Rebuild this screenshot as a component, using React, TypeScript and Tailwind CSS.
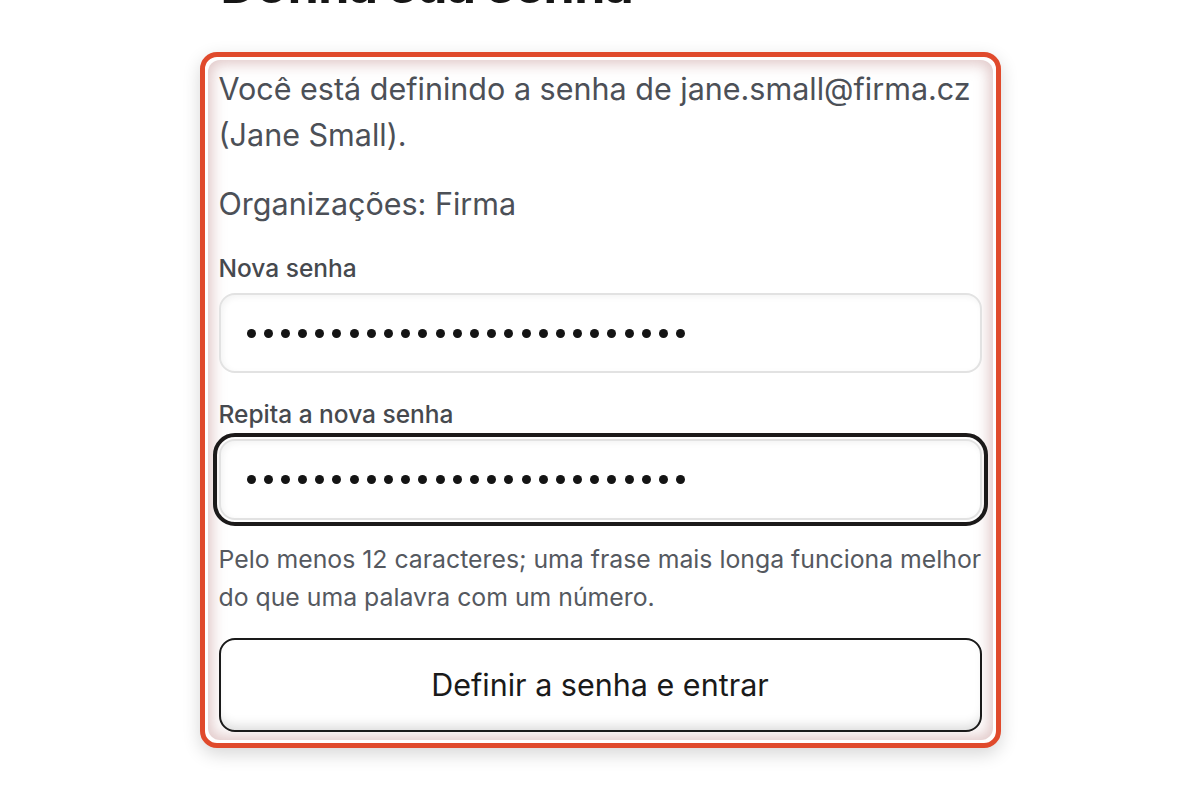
import React from "react";

const Dots = () => (
  <div className="flex items-center gap-[8.2px]">
    {Array.from({ length: 26 }).map((_, i) => (
      <span key={i} className="block w-[9px] h-[9px] rounded-full bg-[#141414]" />
    ))}
  </div>
);

export default function App() {
  return (
    <div
      className="min-h-screen w-full bg-white flex flex-col items-center overflow-hidden"
      style={{ fontFamily: "Inter, 'Noto Sans', Arial, sans-serif" }}
    >
      <div className="w-[801px]">
        <h1 className="-mt-[45px] ml-[21px] text-[50px] leading-[60px] font-bold text-[#161616] tracking-[-0.5px]">
          Defina sua senha
        </h1>
        <div className="mt-[37px] rounded-[17px] border-[5px] border-[#e04a2c] bg-white p-[3px] shadow-[0_6px_18px_rgba(0,0,0,0.16)]">
          <div className="rounded-[12px] bg-white px-[11px] pt-[6px] pb-[8px] shadow-[inset_0_0_14px_4px_rgba(195,145,145,0.5)]">
            <p className="text-[30.5px] leading-[46px] text-[#4c5057]">
              Você está definindo a senha de jane.small@firma.cz (Jane Small).
            </p>
            <p className="mt-[23px] text-[30.5px] leading-[46px] text-[#4c5057]">
              Organizações: Firma
            </p>
            <label className="mt-[23px] block text-[24.5px] leading-[36px] font-medium text-[#46494e]">
              Nova senha
            </label>
            <div className="mt-[7px] h-[80px] w-full rounded-[16px] border-2 border-[#e2e2e2] bg-white px-[26px] flex items-center shadow-[inset_2px_2px_6px_rgba(0,0,0,0.05)]">
              <Dots />
            </div>
            <label className="mt-[23px] block text-[24.5px] leading-[36px] font-medium text-[#46494e]">
              Repita a nova senha
            </label>
            <div className="mt-[7px] h-[81px] w-full rounded-[16px] border-2 border-[#e2e2e2] bg-white px-[26px] flex items-center outline-[4px] outline-solid outline-[#1c1a1a] outline-offset-[2px] shadow-[inset_2px_2px_6px_rgba(0,0,0,0.05)]">
              <Dots />
            </div>
            <p className="mt-[20px] text-[24.8px] leading-[38px] text-[#55595f]">
              Pelo menos 12 caracteres; uma frase mais longa funciona melhor do que uma palavra com um número.
            </p>
            <button className="mt-[22px] h-[94px] w-full rounded-[16px] border-2 border-[#1a1a1a] bg-white text-[30.5px] text-[#1a1a1a] shadow-[inset_0_-10px_12px_-6px_rgba(0,0,0,0.14)]">
              Definir a senha e entrar
            </button>
          </div>
        </div>
      </div>
    </div>
  );
}
